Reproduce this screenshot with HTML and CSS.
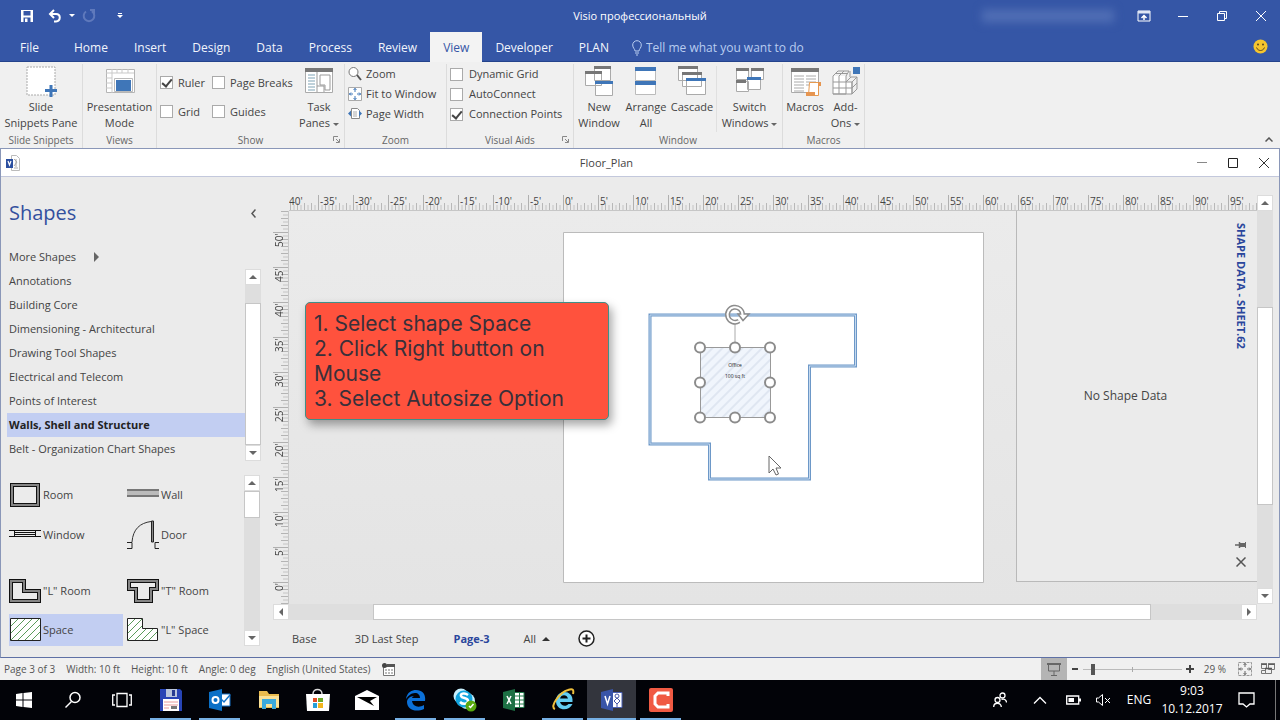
FILE: index.html
```html
<!DOCTYPE html>
<html lang="en">
<head>
<meta charset="utf-8">
<title>Visio профессиональный</title>
<link rel="stylesheet" href="styles.css">
</head>
<body>
<div class="app">
<header class="titlebar">
  <div class="quick">
    <button class="q q-save" aria-label="Save"><svg width="14" height="14" viewBox="0 0 14 14"><path d="M1 1h12v12H1z" fill="#fff"/><path d="M3.500 2h7v4.500h-7zM3.500 8.500h7V13h-7z" fill="#3556a6"/><path d="M5 9.500h2.500V13H5z" fill="#fff"/></svg></button>
    <button class="q" aria-label="Undo"><svg width="14" height="14" viewBox="0 0 14 14"><path d="M6 1 2 5l4 4M2 5h6c5 0 5 7 0 7.500H6" fill="none" stroke="#fff" stroke-width="2"/></svg></button>
    <button class="q q-arrow" aria-label="Undo list"><svg width="6" height="4"><path d="M0 0h6L3 3z" fill="#fff"/></svg></button>
    <button class="q q-redo" aria-label="Redo"><svg width="14" height="14" viewBox="0 0 14 14"><path d="M8 1h4v4M11.500 1.500 10 3M4 2.500a5.300 5.300 0 1 0 6 0" fill="none" stroke="#5f79bc" stroke-width="2"/></svg></button>
    <button class="q" aria-label="Customize toolbar"><svg width="6" height="6"><path d="M1 0h4v1H1zM0 2h6L3 5z" fill="#fff"/></svg></button>
  </div>
  <div class="apptitle">Visio профессиональный</div>
  <div class="wincontrols">
    <span class="account"></span>
    <button aria-label="Ribbon display options"><svg width="14" height="12"><path d="M1 1h12v10H1z" fill="none" stroke="#fff"/><path d="M1 1h12v2.500H1z" fill="#dfe6f5"/><path d="M7 10V6M4.500 8 7 5.500 9.500 8" fill="none" stroke="#fff" stroke-width="1.500"/></svg></button>
    <button aria-label="Minimize"><svg width="12" height="12"><path d="M1 6.500h10" stroke="#fff"/></svg></button>
    <button aria-label="Restore"><svg width="12" height="12"><path d="M1.500 3.500h7v7h-7zM3.500 3V1.500h7v7H9" fill="none" stroke="#fff"/></svg></button>
    <button aria-label="Close"><svg width="12" height="12"><path d="m1 1 10 10M11 1 1 11" stroke="#fff"/></svg></button>
  </div>
</header>
<nav class="tabs">
  <button class="tab file">File</button><button class="tab">Home</button><button class="tab">Insert</button><button class="tab">Design</button><button class="tab">Data</button><button class="tab">Process</button><button class="tab">Review</button><button class="tab active">View</button><button class="tab">Developer</button><button class="tab">PLAN</button>
  <label class="tell"><svg width="10" height="16" viewBox="0 0 10 16"><path d="M3 11C3 9 .700 8 .700 5a4.300 4.300 0 0 1 8.600 0C9.300 8 7 9 7 11zM3 13h4M4 15h2" fill="none" stroke="#b9cdf0"/></svg><input type="text" placeholder="Tell me what you want to do"></label>
  <svg class="smile" width="15" height="15" viewBox="0 0 15 15"><circle cx="7.500" cy="7.500" r="7" fill="#f6c52d"/><circle cx="5" cy="5.500" r="1" fill="#5a4420"/><circle cx="10" cy="5.500" r="1" fill="#5a4420"/><path d="M3.500 8.500c1.500 4 6.500 4 8 0" fill="none" stroke="#5a4420"/></svg>
</nav>
<section class="ribbon">
  <div class="group g-snip">
    <div class="items"><button class="big"><svg width="32" height="32" viewBox="0 0 32 32"><path d="M2 1h28v28H2z" fill="#fff" stroke="#aaa" stroke-dasharray="2 1"/><path d="M24.500 19h3v4h4.500v3h-4.500v5h-3v-5H20v-3h4.500z" fill="#3f76b8"/></svg><span>Slide<br>Snippets Pane</span></button></div>
    <div class="caption">Slide Snippets</div>
  </div>
  <div class="group g-views">
    <div class="items"><button class="big"><svg width="32" height="32" viewBox="0 0 32 32"><path d="M2.500 3.500h28v23h-28z" fill="#fff" stroke="#b5b5b5"/><path d="M2 7h28M8 3v24M2 12h6m-6 5h6m-6 5h6M13 3v4m5-4v4m6-4v4" stroke="#c9c9c9"/><path d="M10.500 12.500h18v13h-18z" fill="#fff" stroke="#bbb"/><path d="M12 14h15v11H12z" fill="#3f76b8"/></svg><span>Presentation<br>Mode</span></button></div>
    <div class="caption">Views</div>
  </div>
  <div class="group g-show">
    <div class="items">
      <div class="checks">
        <label><input type="checkbox" checked>Ruler</label><label><input type="checkbox">Page Breaks</label>
        <label><input type="checkbox">Grid</label><label><input type="checkbox">Guides</label>
      </div>
      <button class="big"><svg width="32" height="32" viewBox="0 0 32 32"><path d="M2.500 3.500h27v23h-27z" fill="#fff" stroke="#aaa"/><path d="M2 2h28v4H2z" fill="#777"/><path d="M5 9h7m-7 3h7m-7 3h7m-7 3h7m-7 3h7m-7 3h7" stroke="#7fa3b5"/><path d="M14 6v20M17 9h10v15h-5v-5h-5zM14 20h7v6" fill="none" stroke="#999"/></svg><span>Task<br>Panes <i class="dn"></i></span></button>
    </div>
    <div class="caption">Show<svg class="launch" width="7" height="7"><path d="M.500 5V.500H5M3 3l3 3M6.500 3v3.500H3" fill="none" stroke="#888"/></svg></div>
  </div>
  <div class="group g-zoom">
    <div class="items stack">
      <button class="small"><svg width="14" height="14" viewBox="0 0 14 14"><circle cx="5.500" cy="5" r="4.500" fill="#fff" stroke="#777"/><path d="m9 8 4 5" stroke="#555" stroke-width="2"/></svg>Zoom</button>
      <button class="small"><svg width="14" height="14" viewBox="0 0 14 14"><path d="M.500.500h13v13H.500z" fill="#fff" stroke="#aaa"/><path d="M7 1v4M7 9v4M1 7h4M9 7h4M5.500 3 7 1.500 8.500 3M5.500 11 7 12.500 8.500 11M3 5.500 1.500 7 3 8.500M11 5.500 12.500 7 11 8.500" fill="none" stroke="#3f76b8"/></svg>Fit to Window</button>
      <button class="small"><svg width="14" height="14" viewBox="0 0 14 14"><path d="M3.500 1.500h6l2 2v8h-8z" fill="#fff" stroke="#888"/><path d="M5 5h4M5 7h4M5 9h4" stroke="#aaa"/><path d="M3 3.500v6L0 6.500zM11 3.500v6l3-3z" fill="#3f76b8"/></svg>Page Width</button>
    </div>
    <div class="caption">Zoom</div>
  </div>
  <div class="group g-aids">
    <div class="items stack">
      <label><input type="checkbox">Dynamic Grid</label><label><input type="checkbox">AutoConnect</label><label><input type="checkbox" checked>Connection Points</label>
    </div>
    <div class="caption">Visual Aids<svg class="launch" width="7" height="7"><path d="M.500 5V.500H5M3 3l3 3M6.500 3v3.500H3" fill="none" stroke="#888"/></svg></div>
  </div>
  <div class="group g-window">
    <div class="items">
      <button class="big w-new"><svg width="32" height="32" viewBox="0 0 32 32"><g fill="#fff" stroke="#aaa"><path d="M11.500 1.500h16v13h-16zM2.500 6.500h16v13h-16zM12.500 16.500h17v13h-17z"/></g><path d="M11 0h17v3H11zM2 5h17v3H2z" fill="#777"/><path d="M12 15h18v3H12z" fill="#3f76b8"/></svg><span>New<br>Window</span></button>
      <button class="big w-arr"><svg width="32" height="32" viewBox="0 0 32 32"><path d="M5.500 1.500h20v13h-20zM5.500 15.500h20v13h-20z" fill="#fff" stroke="#bbb"/><path d="M5 1h21v4H5zM5 15h21v4H5z" fill="#3f76b8"/></svg><span>Arrange<br>All</span></button>
      <button class="big w-cas"><svg width="32" height="32" viewBox="0 0 32 32"><g fill="#fff" stroke="#aaa"><path d="M2.500.500h19v14h-19zM6.500 6.500h19v14h-19zM10.500 12.500h19v16h-19z"/></g><path d="M2 0h20v3H2zM6 6h20v3H6z" fill="#777"/><path d="M10 12h20v3H10z" fill="#3f76b8"/></svg><span>Cascade</span></button>
      <button class="big w-sw"><svg width="32" height="32" viewBox="0 0 32 32"><g fill="#fff" stroke="#aaa"><path d="M2.500 3.500h12v10h-12zM17.500 3.500h12v10h-12zM2.500 15.500h12v10h-12zM13.500 12.500h13v11h-13z"/></g><path d="M2 2h13v3H2zM17 2h13v3H17zM2 14h10v3H2z" fill="#777"/><path d="M13 11h14v3H13z" fill="#3f76b8"/></svg><span>Switch<br>Windows <i class="dn"></i></span></button>
    </div>
    <div class="caption">Window</div>
  </div>
  <div class="group g-mac">
    <div class="items">
      <button class="big w-mac"><svg width="32" height="32" viewBox="0 0 32 32"><path d="M2.500 3.500h27v23h-27z" fill="#fff" stroke="#aaa"/><path d="M2 2h28v4H2z" fill="#777"/><path d="M5 10h10m2 0h10M5 13h10m2 0h10M5 16h10m2 0h10M5 19h10m2 0h3M5 22h10M5 25h10" stroke="#aaa"/><path d="M20.500 16.500h9v13h-10z" fill="#fff" stroke="#e69a50"/><path d="M29 16h3v4h-3zM17 26h9v4h-9z" fill="#e69550"/></svg><span>Macros</span></button>
      <button class="big w-add"><svg width="32" height="32" viewBox="0 0 32 32"><path d="M3 10h13v18H3zM16 16h6v12h-6z" fill="#fff"/><path d="M3 10l5-5h11l-3 5v18H3zM3 16h19v12H3M3 22h19M9 10v18M16 16l5-5h6l-5 5M22 16v12l5-5V11M22 22l5-5M9 10l5-5M20 5v6M5 7.500h12" fill="none" stroke="#999"/><path d="M23 1h7v7h-7z" fill="#3f76b8"/></svg><span>Add-<br>Ons <i class="dn"></i></span></button>
    </div>
    <div class="caption">Macros</div>
  </div>
  <button class="collapse" aria-label="Collapse the ribbon"><svg width="8" height="5"><path d="m.500 4.500 3.500-3.500 3.500 3.500" fill="none" stroke="#555" stroke-width="1.500"/></svg></button>
</section>
<main class="doc">
  <div class="doctitle">
    <svg class="docicon" width="14" height="16" viewBox="0 0 14 16"><path d="M5.500.500h5l3 3v12h-8z" fill="#fff" stroke="#bbb"/><path d="m8 4 3 3-3 4M8 13h4M10 4v8" fill="none" stroke="#aaa"/><path d="M0 4h7v9H0z" fill="#2b4fa0"/><path d="m2 6 1.500 4L5 6" fill="none" stroke="#fff" stroke-width="1.200"/></svg>
    <div class="docname">Floor_Plan</div>
    <button aria-label="Minimize"><svg width="12" height="12"><path d="M1 5.500h10" stroke="#888"/></svg></button>
    <button aria-label="Maximize"><svg width="12" height="12"><path d="M1.500 1.500h9v9h-9z" fill="none" stroke="#222"/></svg></button>
    <button aria-label="Close"><svg width="12" height="12"><path d="m1 1 10 10M11 1 1 11" stroke="#333"/></svg></button>
  </div>
  <div class="docbody">
    <aside class="shapes">
      <div class="shead"><h1>Shapes</h1><button aria-label="Minimize the Shapes window"><svg width="5" height="9"><path d="M4.500.500 1 4.500l3.500 4" fill="none" stroke="#555" stroke-width="1.500"/></svg></button></div>
      <button class="more">More Shapes <svg width="5" height="10"><path d="M0 0v10l5-5z" fill="#666"/></svg></button>
      <div class="stencils">
        <ul>
          <li>Annotations</li><li>Building Core</li><li>Dimensioning - Architectural</li><li>Drawing Tool Shapes</li><li>Electrical and Telecom</li><li>Points of Interest</li><li class="sel">Walls, Shell and Structure</li><li>Belt - Organization Chart Shapes</li>
        </ul>
        <div class="vbar"><button aria-label="Up"><i class="up"></i></button><span class="track t18"></span><span class="thumb grow"></span><button aria-label="Down"><i class="down"></i></button></div>
      </div>
      <div class="masters">
        <div class="mgrid">
          <div class="m"><svg width="32" height="24" viewBox="0 0 32 24"><path d="M3 2h26v20H3z" fill="none" stroke="#111" stroke-width="4"/><path d="M3 2h26v20H3z" fill="none" stroke="#858585" stroke-width="2"/></svg>Room</div>
          <div class="m"><svg width="32" height="24" viewBox="0 0 32 24"><path d="M0 6h32v8H0z" fill="#bbb"/><path d="M0 7h32M0 13h32" stroke="#777" stroke-width="2"/></svg>Wall</div>
          <div class="m"><svg width="32" height="24" viewBox="0 0 32 24"><path d="M0 7.500h32M0 13.500h32M5 9.500h22M5 11.500h22M5.500 7v7M26.500 7v7" stroke="#111" fill="none"/></svg>Window</div>
          <div class="m"><svg width="32" height="30" viewBox="0 0 32 30"><path d="M5 22C6 9 13 3 24 1.500" fill="none" stroke="#333"/><path d="M24.500 1h2v21h-2z" fill="#888" stroke="#222"/><path d="M0 22.500h5v6H0M32 22.500h-4v6h4" fill="none" stroke="#222"/></svg>Door</div>
          <div class="m"><svg width="32" height="24" viewBox="0 0 32 24"><path d="M2 2h13v10h15v10H2z" fill="none" stroke="#111" stroke-width="4"/><path d="M2 2h13v10h15v10H2z" fill="none" stroke="#858585" stroke-width="2"/></svg>"L" Room</div>
          <div class="m"><svg width="32" height="24" viewBox="0 0 32 24"><path d="M2 2h28v8h-6v12H9V10H2z" fill="none" stroke="#111" stroke-width="4"/><path d="M2 2h28v8h-6v12H9V10H2z" fill="none" stroke="#858585" stroke-width="2"/></svg>"T" Room</div>
          <div class="m sel"><svg width="32" height="24" viewBox="0 0 32 24"><path d="M1.500.500h30v22h-30z" fill="#fff" stroke="#222"/><path d="m2 8 7-7M2 15 16 1M2 22 23 1M9 22 30 1M16 22 31 7M23 22l8-8" stroke="#5a9b5a"/></svg>Space</div>
          <div class="m"><svg width="32" height="24" viewBox="0 0 32 24"><path d="M.500.500h15v10h15v12H.500z" fill="#fff" stroke="#222"/><path d="m1 8 7-7M1 15 15 1M1 22 15 8M8 22l11-11M15 22l11-11M22 22l8-8" stroke="#5a9b5a"/></svg>"L" Space</div>
        </div>
        <div class="vbar"><button aria-label="Up"><i class="up"></i></button><span class="thumb t27"></span><span class="track grow"></span><button aria-label="Down"><i class="down"></i></button></div>
      </div>
    </aside>
    <section class="work">
      <div class="corner"></div>
      <div class="hruler">
        <svg class="ticks" width="100%" height="16"><defs><pattern id="hp" width="35" height="16" patternUnits="userSpaceOnUse" x="-6"><path d="M.500 0v16" stroke="#b0b0b0"/><path d="M7.500 8v8M14.500 8v8M21.500 8v8M28.500 8v8" stroke="#b8b8b8"/><path d="M4 10v6M11 10v6M18 10v6M25 10v6M32 10v6" stroke="#c4c4c4"/></pattern></defs><rect width="100%" height="16" fill="url(#hp)"/></svg>
        <div class="hlabels"><span class="first">40'</span><span>-35'</span><span>-30'</span><span>-25'</span><span>-20'</span><span>-15'</span><span>-10'</span><span>-5'</span><span>0'</span><span>5'</span><span>10'</span><span>15'</span><span>20'</span><span>25'</span><span>30'</span><span>35'</span><span>40'</span><span>45'</span><span>50'</span><span>55'</span><span>60'</span><span>65'</span><span>70'</span><span>75'</span><span>80'</span><span>85'</span><span>90'</span><span>95'</span></div>
      </div>
      <div class="vruler">
        <svg class="ticks" width="16" height="100%"><defs><pattern id="vp" width="16" height="35" patternUnits="userSpaceOnUse" y="21"><path d="M0 .500h16" stroke="#b0b0b0"/><path d="M8 7.500h8M8 14.500h8M8 21.500h8M8 28.500h8" stroke="#b4b4b4"/><path d="M10 4h6M10 11h6M10 18h6M10 25h6M10 32h6" stroke="#c4c4c4"/></pattern></defs><rect width="16" height="100%" fill="url(#vp)"/></svg>
        <div class="vlabels"><span>50'</span><span>45'</span><span>40'</span><span>35'</span><span>30'</span><span>25'</span><span>20'</span><span>15'</span><span>10'</span><span>5'</span><span>0'</span></div>
      </div>
      <div class="canvas">
        <svg class="page" width="422" height="352" viewBox="563 232 422 352">
          <defs><pattern id="hatch" width="7" height="7" patternUnits="userSpaceOnUse" patternTransform="rotate(45)"><rect width="7" height="7" fill="#f0f5fc"/><rect width="2" height="7" fill="#dfe6f1"/></pattern></defs>
          <path d="M563.500 232.500h420v350h-420z" fill="#fff" stroke="#bbb"/>
          <g fill="none"><path d="M650 315h205.500v51h-46v113h-100v-35H650z" stroke="#6d98c8" stroke-width="3"/><path d="M650 315h205.500v51h-46v113h-100v-35H650z" stroke="#c5d9ee" stroke-width="1"/></g>
          <path d="M735 324v20" stroke="#aaa"/>
          <path d="M700.500 347.500h70v70h-70z" fill="url(#hatch)" stroke="#999"/>
          <g fill="#fff" stroke="#8c8c8c" stroke-width="2"><circle cx="700" cy="347.500" r="5"/><circle cx="735" cy="347.500" r="5"/><circle cx="770" cy="347.500" r="5"/><circle cx="700" cy="382.500" r="5"/><circle cx="770" cy="382.500" r="5"/><circle cx="700" cy="417.500" r="5"/><circle cx="735" cy="417.500" r="5"/><circle cx="770" cy="417.500" r="5"/></g>
          <path d="M739 321a7.500 7.500 0 1 1 3.500-6" fill="none" stroke="#8c8c8c" stroke-width="5"/><path d="M738 314h11l-6 6.500z" fill="#fff" stroke="#8c8c8c" stroke-width="1.500"/><path d="M739 321a7.500 7.500 0 1 1 3.500-6" fill="none" stroke="#fff" stroke-width="2"/>
          <text class="tiny" x="735" y="367">Office</text><text class="tiny" x="735" y="378">100 sq ft</text>
          <path d="M769 456v17l4-4 3 6 2.500-1-2.500-6h5z" fill="#fff" stroke="#666"/>
        </svg>
        <div class="callout">1. Select shape Space<br>2. Click Right button on<br>Mouse<br>3. Select Autosize Option</div>
        <section class="datapane">
          <p>No Shape Data</p>
          <div class="side"><h2>SHAPE DATA - SHEET.62</h2>
            <button aria-label="Pin"><svg width="12" height="8"><path d="M0 4h4M4.500 1v6" stroke="#666" stroke-width="1.500"/><path d="M5 2h5v4H5zM10 1h1v6h-1z" fill="#666"/></svg></button>
            <button aria-label="Close"><svg width="10" height="10"><path d="m.500.500 9 9M9.500.500l-9 9" stroke="#555" stroke-width="1.500"/></svg></button></div>
        </section>
      </div>
      <div class="vbar mainv"><button aria-label="Up"><i class="up"></i></button><span class="track t96"></span><span class="thumb grow"></span><span class="track t83"></span><button aria-label="Down"><i class="down"></i></button></div>
      <div class="hbar"><button aria-label="Left"><i class="left"></i></button><span class="track h84"></span><span class="thumb grow"></span><span class="track h90"></span><button aria-label="Right"><i class="right"></i></button></div>
      <div class="pagetabs"><button class="pt-base">Base</button><button class="pt-last">3D Last Step</button><button class="pt-cur">Page-3</button><button class="pt-all">All <i class="up dark"></i></button><button aria-label="Insert page"><svg width="17" height="17"><circle cx="8.500" cy="8.500" r="7.500" fill="#fff" stroke="#222" stroke-width="1.500"/><path d="M8.500 4.500v8M4.500 8.500h8" stroke="#222" stroke-width="2"/></svg></button></div>
    </section>
  </div>
</main>
<footer class="status">
  <span>Page 3 of 3</span><span>Width: 10 ft</span><span>Height: 10 ft</span><span>Angle: 0 deg</span><span>English (United States)</span>
  <button class="macrec" aria-label="Record macro"><svg width="14" height="13"><path d="M1.500 3.500h11v9h-11z" fill="#fff" stroke="#777"/><path d="M5 1h8v3H5z" fill="#555"/><circle cx="2.500" cy="2.500" r="2.500" fill="#444"/><path d="M3 7h8M3 10h8" stroke="#777" stroke-dasharray="2 1"/></svg></button>
  <button class="present" aria-label="Presentation Mode"><svg width="14" height="13"><path d="M0 1h14" stroke="#666" stroke-width="2"/><path d="M1.500 2v6h11V2M7 8v4M4 12.500h6" fill="none" stroke="#666"/></svg></button>
  <button class="zbtn" aria-label="Zoom out"><svg width="8" height="8"><path d="M1 4h6" stroke="#444" stroke-width="2"/></svg></button>
  <input class="zoom" type="range" min="0" max="100" value="9" aria-label="Zoom level">
  <button class="zbtn" aria-label="Zoom in"><svg width="8" height="8"><path d="M0 4h8M4 0v8" stroke="#444" stroke-width="2"/></svg></button>
  <span class="pct">29 %</span>
  <button class="fit" aria-label="Fit page"><svg width="14" height="14" viewBox="0 0 14 14"><path d="M.500.500h13v13H.500z" fill="none" stroke="#999" stroke-dasharray="3 1"/><path d="M7 1v4M7 9v4M1 7h4M9 7h4M5.500 3 7 1.500 8.500 3M5.500 11 7 12.500 8.500 11M3 5.500 1.500 7 3 8.500M11 5.500 12.500 7 11 8.500" fill="none" stroke="#666"/></svg></button>
  <button class="switch" aria-label="Switch windows"><svg width="15" height="12"><path d="M1.500 1.500h5v4h-5zM8.500 1.500h6v5h-6zM1.500 7.500h4v3h-4zM5.500 5.500h6v5h-6z" fill="#f0f0f0" stroke="#777"/><path d="M1 1h6M8 1h7M5 5.500h7" stroke="#555" stroke-width="1.500"/></svg></button>
</footer>
<nav class="taskbar">
  <button class="start" aria-label="Start"><svg width="16" height="16" viewBox="0 0 16 16"><path d="m0 2 6.500-1v6.500H0zM7.500 1 16 0v7.500H7.500zM0 8.500h6.500V15L0 14zM7.500 8.500H16V16l-8.500-1z" fill="#fff"/></svg></button>
  <button aria-label="Search"><svg width="18" height="18"><circle cx="11" cy="6.500" r="5" fill="none" stroke="#fff" stroke-width="1.500"/><path d="m7.500 10.500-6 6" stroke="#fff" stroke-width="1.500"/></svg></button>
  <button aria-label="Task view"><svg width="20" height="16"><path d="M5 1.500h10v13H5zM3 3H.700v10H3M17 3h2.300v10H17" fill="none" stroke="#fff" stroke-width="1.300"/></svg></button>
  <button class="run" aria-label="File manager"><svg width="22" height="22"><path d="M0 0h20l2 2v20H0z" fill="#2744b5"/><path d="M6 0h11v8H6z" fill="#b8c5dc"/><path d="M12 1h3v6h-3z" fill="#263c90"/><path d="M3 10h16v12H3z" fill="#fff"/><path d="M4 13h14M4 16h14M4 19h5" stroke="#e79a9a"/><path d="M11 17h6v3h-6z" fill="#777"/></svg></button>
  <button class="run" aria-label="Outlook"><svg width="22" height="22"><path d="M10 5h11v12H10z" fill="#fff" stroke="#1473c8"/><path d="m11 9 4 4 6-7" fill="none" stroke="#1473c8" stroke-width="1.500"/><path d="m0 3 13-3v22L0 19z" fill="#0b70c6"/><circle cx="6.500" cy="11" r="3" fill="none" stroke="#fff" stroke-width="2"/></svg></button>
  <button aria-label="File Explorer"><svg width="22" height="20"><path d="M1 1h8l2 3h10v14H1z" fill="#e9bb4e"/><path d="M1 6h20v11H1z" fill="#fae197"/><path d="M4 9h14v10h-4v-5H8v5H4z" fill="#3aa9dc"/></svg></button>
  <button aria-label="Store"><svg width="24" height="24"><path d="M7 8V6c0-6 9-6 9 0v2" fill="none" stroke="#ddd" stroke-width="1.500"/><path d="M0 6h24l-1 17H1z" fill="#fff"/><path d="M7 10h4v4H7z" fill="#e34d25"/><path d="M12 10h5v4h-5z" fill="#6caa28"/><path d="M7 15h4v5H7z" fill="#249ed9"/><path d="M12 15h5v5h-5z" fill="#f2b51d"/></svg></button>
  <button aria-label="Mail"><svg width="24" height="20"><path d="M0 6 12 0l12 6v14H0z" fill="#fff"/><path d="M2 7h20l-7 4 4 5z" fill="#000"/></svg></button>
  <button class="run" aria-label="Edge"><svg width="22" height="22"><path d="M1 10C2 3 7 1 11 1c7 0 10 5 9 11H7c1 6 7 7 12 4v4C10 24 2 20 2 13c0-3 3-6 7-6-2 1-2 2-2 2h8c0-3-2-5-5-5-4 0-7 3-9 6z" fill="#0b70d8"/></svg></button>
  <button class="run" aria-label="Skype"><svg width="24" height="24"><circle cx="8" cy="8" r="7.500" fill="#c8f1ff"/><circle cx="14" cy="13" r="8" fill="#c8f1ff"/><circle cx="11" cy="11" r="8.500" fill="#12a5df"/><path d="M15 7c-4-3-8-1-7 1 1 3 7 1 7 5 0 3-5 4-8 1" fill="none" stroke="#fff" stroke-width="2.500"/><circle cx="18" cy="18" r="5.500" fill="#59a80f"/><path d="m16 18 1.500 1.500L20.500 16" fill="none" stroke="#fff" stroke-width="1.500"/></svg></button>
  <button aria-label="Excel"><svg width="22" height="22"><path d="M11 3.500h10v15H11z" fill="#fff" stroke="#237a4b"/><path d="M11 7h10m-10 4h10m-10 4h10M16.500 3v16" stroke="#237a4b"/><path d="m0 3 12-3v22L0 19z" fill="#1d7044"/><path d="m4 7 4 8m0-8-4 8" stroke="#fff" stroke-width="1.500"/></svg></button>
  <button class="run" aria-label="Internet Explorer"><svg width="24" height="24"><path d="M21.500 14H9c1 4 6 5 8.500 2h4C18 24 5 23 5 13 5 1 23 1 21.500 14zM9 10.500h8c-1-4.500-7-4.500-8 0z" fill="#63cdf2"/><path d="M4 21C-2 19 9 4 17 2c5-2 6 0 5 4" fill="none" stroke="#eebf3c" stroke-width="2"/></svg></button>
  <button class="run current" aria-label="Visio"><svg width="22" height="22"><path d="M11 3.500h10v15H11z" fill="#fff" stroke="#4b61b4"/><circle cx="16" cy="7" r="2" fill="none" stroke="#4457a6"/><path d="m13 12 3-3 3 3-3 3zM16 15v3" fill="none" stroke="#4457a6"/><path d="m0 3 12-3v22L0 19z" fill="#3955a8"/><path d="m4 7 2.500 8L9 7" fill="none" stroke="#fff" stroke-width="1.500"/></svg></button>
  <button class="run" aria-label="Camtasia"><svg width="24" height="24"><rect width="24" height="24" rx="2" fill="#f05a43"/><path d="M19 8V5H9L6 8v8l3 3h10v-3" fill="none" stroke="#fff" stroke-width="3"/></svg></button>
  <div class="tray">
    <button class="t-people" aria-label="People"><svg width="14" height="16"><g fill="none" stroke="#fff" stroke-width="1.300"><circle cx="9.500" cy="3.500" r="2.500"/><circle cx="4.500" cy="8" r="2.500"/><path d="M.700 15c0-5 7.600-5 7.600 0M8.500 7.500c3-1 5 .500 5 3"/></g></svg></button>
    <button class="t-caret" aria-label="Hidden icons"><svg width="14" height="8"><path d="m1 7.500 6-6 6 6" fill="none" stroke="#fff" stroke-width="1.300"/></svg></button>
    <button class="t-bat" aria-label="Battery"><svg width="15" height="10"><path d="M.700 1h12v8h-12z" fill="none" stroke="#fff" stroke-width="1.300"/><path d="M2.500 3H8v4H2.500zM13 3.500h2v3h-2z" fill="#fff"/></svg></button>
    <button class="t-vol" aria-label="Volume"><svg width="15" height="12"><path d="M.500 4h2l4-3.500v11L2.500 8h-2zM9 4l5 5m0-5L9 9" fill="none" stroke="#fff"/></svg></button>
    <button class="t-lang">ENG</button>
    <button class="t-clock">9:03<br>10.12.2017</button>
    <button class="t-note" aria-label="Notifications"><svg width="17" height="16"><path d="M1 1h15v11h-4l-3.500 3L5 12H1z" fill="none" stroke="#fff" stroke-width="1.300"/></svg></button>
  </div>
</nav>
</div>
</body>
</html>
```
FILE: styles.css
```css
* { box-sizing: border-box; }
body { margin: 0; font: 11px/16px "Open Sans", "Noto Sans", sans-serif; color: #444; }
button { border: 0; padding: 0; margin: 0; background: none; font: inherit; color: inherit; display: flex; align-items: center; justify-content: center; flex: none; }
svg { display: block; flex: none; }
h1, h2, p, ul { margin: 0; padding: 0; }
.app { display: flex; flex-direction: column; min-height: 100vh; background: #f0f0f0; }

.titlebar { display: grid; grid-template-columns: 1fr auto 1fr; align-items: center; height: 32px; background: #3556a6; color: #fff; }
.quick { display: flex; align-items: center; padding-left: 20px; }
.q { width: 14px; height: 24px; }
.q-save { margin-right: 14px; }
.q-arrow { width: 20px; }
.q-redo { margin-right: 17px; }
.apptitle { font-size: 11px; }
.wincontrols { display: flex; justify-content: flex-end; align-items: center; height: 28px; }
.wincontrols button { width: 39px; height: 28px; }
.account { width: 132px; height: 12px; margin-right: 10px; background: #5270b6; filter: blur(5px); }

.tabs { display: flex; height: 30px; background: #3556a6; color: #f2f5fc; border-bottom: 1px solid #24438c; font-size: 12px; }
.tab { padding: 2px 13px 0; height: 30px; }
.tab.file { padding: 2px 22px 0 20px; }
.tab.active { background: #f3f3f3; color: #3556a6; }
.tell { display: flex; align-items: center; flex: 1; gap: 4px; padding: 2px 0 0 10px; }
.tell input { flex: 1; min-width: 0; border: 0; padding: 0; background: none; font: inherit; outline: 0; }
.tell input::placeholder { color: #b9cdf0; opacity: 1; }
.smile { margin: 7px 12px 0 0; }

.ribbon { display: flex; height: 86px; background: #f0f0f0; }
.group { display: flex; flex-direction: column; border-right: 1px solid #dcdcdc; margin: 2px 0 0; flex: none; }
.items { display: flex; flex: 1; padding-top: 2px; }
.caption { height: 16px; text-align: center; color: #666; position: relative; font-size: 10px; }
.launch { position: absolute; right: 4px; bottom: 5px; }
.g-snip { width: 83px; }
.g-views { width: 74px; }
.g-show { width: 188px; }
.g-zoom { width: 102px; }
.g-aids { width: 127px; }
.g-window { width: 209px; }
.g-mac { width: 82px; }
.big { flex: 1 0 auto; flex-direction: column; justify-content: flex-start; line-height: 16px; gap: 1px; }
.big span { text-align: center; white-space: nowrap; }
.w-new { flex: 0 0 50px; }
.w-arr { flex: 0 0 44px; }
.w-cas { flex: 0 0 48px; }
.w-sw { border-left: 1px solid #e0e0e0; }
.w-mac { flex: 0 0 44px; }
.dn { display: inline-block; border: 3px solid transparent; border-top-color: #666; border-bottom: 0; vertical-align: middle; }
label { display: flex; align-items: center; }
input[type="checkbox"] { appearance: none; width: 13px; height: 13px; margin: 0 6px 0 0; border: 1px solid #aaa; background: #fff; display: grid; place-items: center; flex: none; }
input[type="checkbox"]:checked::after { content: ""; width: 4px; height: 8px; margin-bottom: 2px; border: solid #444; border-width: 0 2px 2px 0; transform: rotate(40deg); }
.checks { display: grid; grid-template-columns: 52px 82px; grid-auto-rows: 29px; padding: 2px 0 0 3px; white-space: nowrap; }
.checks input[type="checkbox"] { margin-right: 5px; }
.stack { flex-direction: column; padding: 0 0 0 3px; }
.stack label, .small { height: 20px; justify-content: flex-start; white-space: nowrap; }
.small { gap: 4px; }
.collapse { margin: auto 7px 6px auto; }

.doc { display: flex; flex-direction: column; flex: 1; border: 1px solid #8a97b8; border-bottom-color: #5e70a5; background: #ebebeb; }
.doctitle { display: flex; align-items: center; height: 28px; background: #fff; border-bottom: 1px solid #c3c8dc; }
.doctitle button { width: 31px; height: 26px; }
.docicon { margin: 0 7px 0 5px; }
.docname { flex: 1; text-align: center; }
.docbody { display: flex; flex: 1; }

.shapes { width: 272px; flex: none; padding: 20px 0 5px; }
.shead { display: flex; justify-content: space-between; align-items: center; height: 32px; margin-bottom: 16px; padding: 0 17px 0 8px; }
.shead h1 { font-size: 20px; line-height: 32px; font-weight: 400; color: #33509e; }
.more { height: 24px; padding-left: 8px; gap: 18px; }
.stencils { display: flex; padding-left: 6px; margin-bottom: 14px; }
.stencils ul { list-style: none; flex: 1; }
.stencils li { height: 24px; line-height: 24px; padding-left: 2px; }
.sel { background: #c2cef2; }
.stencils .sel { font-weight: 700; color: #222; }
.stencils .vbar { margin-right: 12px; }
.masters { display: flex; padding-left: 8px; height: 176px; }
.masters .vbar { margin: 0 13px 5px 0; }
.mgrid { flex: 1; display: grid; grid-template-columns: 114px 1fr; column-gap: 4px; grid-template-rows: 40px 56px 40px 32px; }
.m { display: flex; align-items: center; gap: 2px; height: 40px; white-space: nowrap; }
.m:nth-child(3), .m:nth-child(4) { height: 40px; }
.m:nth-child(5), .m:nth-child(6) { height: 40px; }
.m:nth-child(7), .m:nth-child(8) { height: 32px; margin-top: 3px; }

.vbar { display: flex; flex-direction: column; width: 16px; flex: none; }
.vbar button, .hbar button { width: 16px; height: 16px; background: #fff; border: 1px solid #dcdcdc; }
.track { background: #dedede; flex: none; }
.thumb { background: #fff; border: 1px solid #c6c6c6; flex: none; }
.grow { flex: 1; }
.t18 { height: 18px; }
.t27 { height: 27px; }
.t96 { height: 96px; }
.t83 { height: 83px; }
.h84 { width: 84px; }
.h90 { width: 90px; }
.up, .down, .left, .right { width: 0; height: 0; border: 4px solid transparent; }
.up { border-top: 0; border-bottom-color: #666; }
.down { border-bottom: 0; border-top-color: #666; }
.left { border-left: 0; border-right-color: #666; }
.right { border-right: 0; border-left-color: #666; }
.dark { border-bottom-color: #333; }

.work { flex: 1; min-width: 0; display: grid; grid-template: 16px 1fr 16px 37px / 16px 1fr 16px; padding: 18px 6px 0 0; }
.hruler, .vruler { position: relative; overflow: hidden; font-size: 10px; color: #444; }
.hruler { border-bottom: 1px solid #c6c6c6; }
.vruler { border-right: 1px solid #c6c6c6; grid-row: 2; grid-column: 1; }
.ticks { position: absolute; inset: 0; }
.hlabels { display: flex; position: relative; }
.hlabels span { flex: 0 0 35px; padding-left: 2px; line-height: 12px; }
.hlabels .first { flex-basis: 29px; padding-left: 0; }
.vlabels { position: absolute; top: 22px; left: 0; }
.vlabels span { display: block; height: 35px; width: 12px; line-height: 12px; writing-mode: vertical-rl; transform: rotate(180deg); text-align: right; }
.canvas { position: relative; overflow: hidden; grid-row: 2; grid-column: 2; min-height: 391px; background: linear-gradient(#ebebeb, #e4e4e4); }
.page { position: absolute; left: 274px; top: 21px; }
.tiny { font: 5px "Open Sans", sans-serif; text-anchor: middle; fill: #222; }
.callout { position: absolute; left: 16px; top: 91px; width: 304px; padding: 8px; border: 1px solid #3f8f88; border-radius: 5px; background: #ff523d; color: #39303a; font: 400 21px/25px Inter, sans-serif; white-space: nowrap; box-shadow: 3px 5px 10px rgba(0, 0, 0, .35); }
.datapane { position: absolute; right: 0; top: 0; bottom: 22px; width: 241px; display: flex; align-items: center; border: 1px solid #b9b9b9; border-width: 0 0 1px 1px; background: #ebebeb; }
.datapane p { flex: 1; text-align: center; font-size: 12px; padding-left: 6px; }
.side { width: 25px; align-self: stretch; display: flex; flex-direction: column; align-items: center; padding: 12px 0 11px; margin-right: 4px; }
.side h2 { writing-mode: vertical-rl; font-size: 11px; line-height: 16px; color: #2a469c; margin-bottom: auto; }
.side button { height: 17px; }
.mainv { grid-row: 1 / 3; grid-column: 3; }
.hbar { grid-row: 3; grid-column: 1 / 3; display: flex; }
.pagetabs { grid-row: 4; grid-column: 1 / 4; display: flex; align-items: center; padding-left: 19px; }
.pagetabs button { height: 24px; }
.pt-base { margin-right: 38px; }
.pt-last { margin-right: 35px; }
.pt-cur { margin-right: 34px; font-weight: 700; color: #2a469c; }
.pt-all { margin-right: 28px; gap: 6px; }

.status { display: flex; align-items: center; height: 22px; padding-left: 4px; background: #f0f0f0; color: #555; font-size: 10px; white-space: nowrap; }
.status span { margin-right: 11px; }
.present { width: 26px; height: 22px; margin-left: auto; background: #b4b4b4; }
.zbtn { width: 16px; height: 16px; }
.zoom { appearance: none; width: 99px; height: 16px; margin: 0; background: linear-gradient(#aaa, #aaa) center / 1px 5px no-repeat, linear-gradient(#bbb, #bbb) center / 100% 1px no-repeat; }
.zoom::-webkit-slider-thumb { appearance: none; width: 4px; height: 11px; background: #555; }
.status .pct { margin: 0 12px 0 6px; }
.fit { margin-right: 8px; }
.switch { margin-right: 5px; }

.taskbar { display: flex; height: 40px; background: #020308; color: #fff; }
.taskbar > button { width: 49px; height: 40px; position: relative; }
.taskbar > .start { width: 48px; }
.run::after { content: ""; position: absolute; left: 4px; right: 4px; bottom: 0; height: 2px; background: #76b0e4; }
.current { background: #33353d; }
.current::after { left: 0; right: 0; }
.tray { margin-left: auto; display: flex; border-right: 1px solid #777; margin-right: 4px; }
.tray button { height: 40px; font-size: 12px; line-height: 18px; }
.t-people { width: 40px; }
.t-caret { width: 40px; }
.t-bat { width: 26px; }
.t-vol { width: 34px; }
.t-lang { width: 38px; }
.t-clock { width: 68px; }
.t-note { width: 41px; margin-right: 8px; }
```
